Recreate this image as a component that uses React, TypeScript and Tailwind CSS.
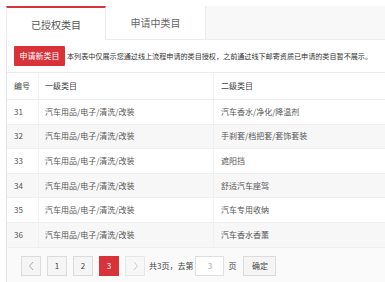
const rows = [
  { id: 31, first: "汽车用品/电子/清洗/改装", second: "汽车香水/净化/降温剂" },
  { id: 32, first: "汽车用品/电子/清洗/改装", second: "手刹套/档把套/套饰套装" },
  { id: 33, first: "汽车用品/电子/清洗/改装", second: "遮阳挡" },
  { id: 34, first: "汽车用品/电子/清洗/改装", second: "舒适汽车座驾" },
  { id: 35, first: "汽车用品/电子/清洗/改装", second: "汽车专用收纳" },
  { id: 36, first: "汽车用品/电子/清洗/改装", second: "汽车香水香薰" },
];

const font = { fontFamily: '"Noto Sans CJK SC", "Liberation Sans", sans-serif' };

export default function App() {
  return (
    <div className="w-[385px] h-[282px] bg-white overflow-hidden pt-[6px] pl-[6px]" style={font}>
      {/* tabs */}
      <div className="flex h-[34px] bg-[#f8f8f8] border-b border-[#ececec]">
        <div className="w-[100px] bg-white border-t-2 border-[#d9333a] border-l border-r border-l-[#ececec] border-r-[#ececec] flex items-center justify-center text-[10px] text-[#555] -mb-px">
          已授权类目
        </div>
        <div className="w-[100px] bg-white flex items-center justify-center text-[10px] text-[#666] border-r border-[#ececec]">
          申请中类目
        </div>
      </div>

      <div className="border-l border-[#e6e6e6] bg-[#fafafa] h-full">
        {/* notice */}
        <div className="flex items-center h-[33px] pl-[7px] bg-white border-b border-[#ececec]">
          <button className="h-[20px] w-[51px] bg-[#d9333a] text-white text-[8px] rounded-[1px] shrink-0">
            申请新类目
          </button>
          <span className="ml-[2px] text-[7.1px] text-[#333] whitespace-nowrap">
            本列表中仅展示您通过线上流程申请的类目授权，之前通过线下邮寄资质已申请的类目暂不展示。
          </span>
        </div>

        {/* table */}
        <div className="bg-white text-[8px] text-[#555]">
          <div className="flex h-[27px] items-center border-b border-[#ececec] bg-white text-[#444]">
            <div className="w-[32px] pl-[7px] self-stretch flex items-center border-r border-[#f0f0f0]">编号</div>
            <div className="w-[175px] pl-[6px] self-stretch flex items-center border-r border-[#f0f0f0]">一级类目</div>
            <div className="pl-[7px]">二级类目</div>
          </div>
          {rows.map((r, i) => (
            <div
              key={r.id}
              className={`flex h-[24.6px] items-center border-b border-[#efefef] ${i % 2 === 1 ? "bg-[#f7f7f7]" : "bg-white"}`}
            >
              <div className="w-[32px] pl-[7px] self-stretch flex items-center border-r border-[#f0f0f0]">{r.id}</div>
              <div className="w-[175px] pl-[6px] self-stretch flex items-center border-r border-[#f0f0f0]">{r.first}</div>
              <div className="pl-[7px]">{r.second}</div>
            </div>
          ))}
        </div>

        {/* pagination */}
        <div className="flex items-center h-[37px] pl-[14px] bg-[#fafafa] text-[8px] text-[#444]">
          <button className="w-[20px] h-[20px] border border-[#dcdcdc] bg-[#f5f5f5] text-[#999] flex items-center justify-center">
            <svg width="7" height="10" viewBox="0 0 7 10" fill="none" stroke="#aaa" strokeWidth="1">
              <path d="M5 1L1.5 5L5 9" />
            </svg>
          </button>
          <button className="ml-[6px] w-[20px] h-[20px] border border-[#dcdcdc] bg-[#f5f5f5] flex items-center justify-center">1</button>
          <button className="ml-[6px] w-[20px] h-[20px] border border-[#dcdcdc] bg-[#f5f5f5] flex items-center justify-center">2</button>
          <button className="ml-[6px] w-[20px] h-[20px] bg-[#d9333a] text-white flex items-center justify-center">3</button>
          <button className="ml-[6px] w-[20px] h-[20px] border border-[#e6e6e6] bg-[#f7f7f7] flex items-center justify-center">
            <svg width="7" height="10" viewBox="0 0 7 10" fill="none" stroke="#ccc" strokeWidth="1">
              <path d="M2 1L5.5 5L2 9" />
            </svg>
          </button>
          <span className="ml-[4px]">共3页，去第</span>
          <div className="ml-[2px] w-[29px] h-[20px] border border-[#e0e0e0] bg-white flex items-center justify-center text-[#aaa]">3</div>
          <span className="ml-[4px]">页</span>
          <button className="ml-[7px] w-[33px] h-[20px] border border-[#dcdcdc] bg-[#f5f5f5] flex items-center justify-center">确定</button>
        </div>
      </div>
    </div>
  );
}
